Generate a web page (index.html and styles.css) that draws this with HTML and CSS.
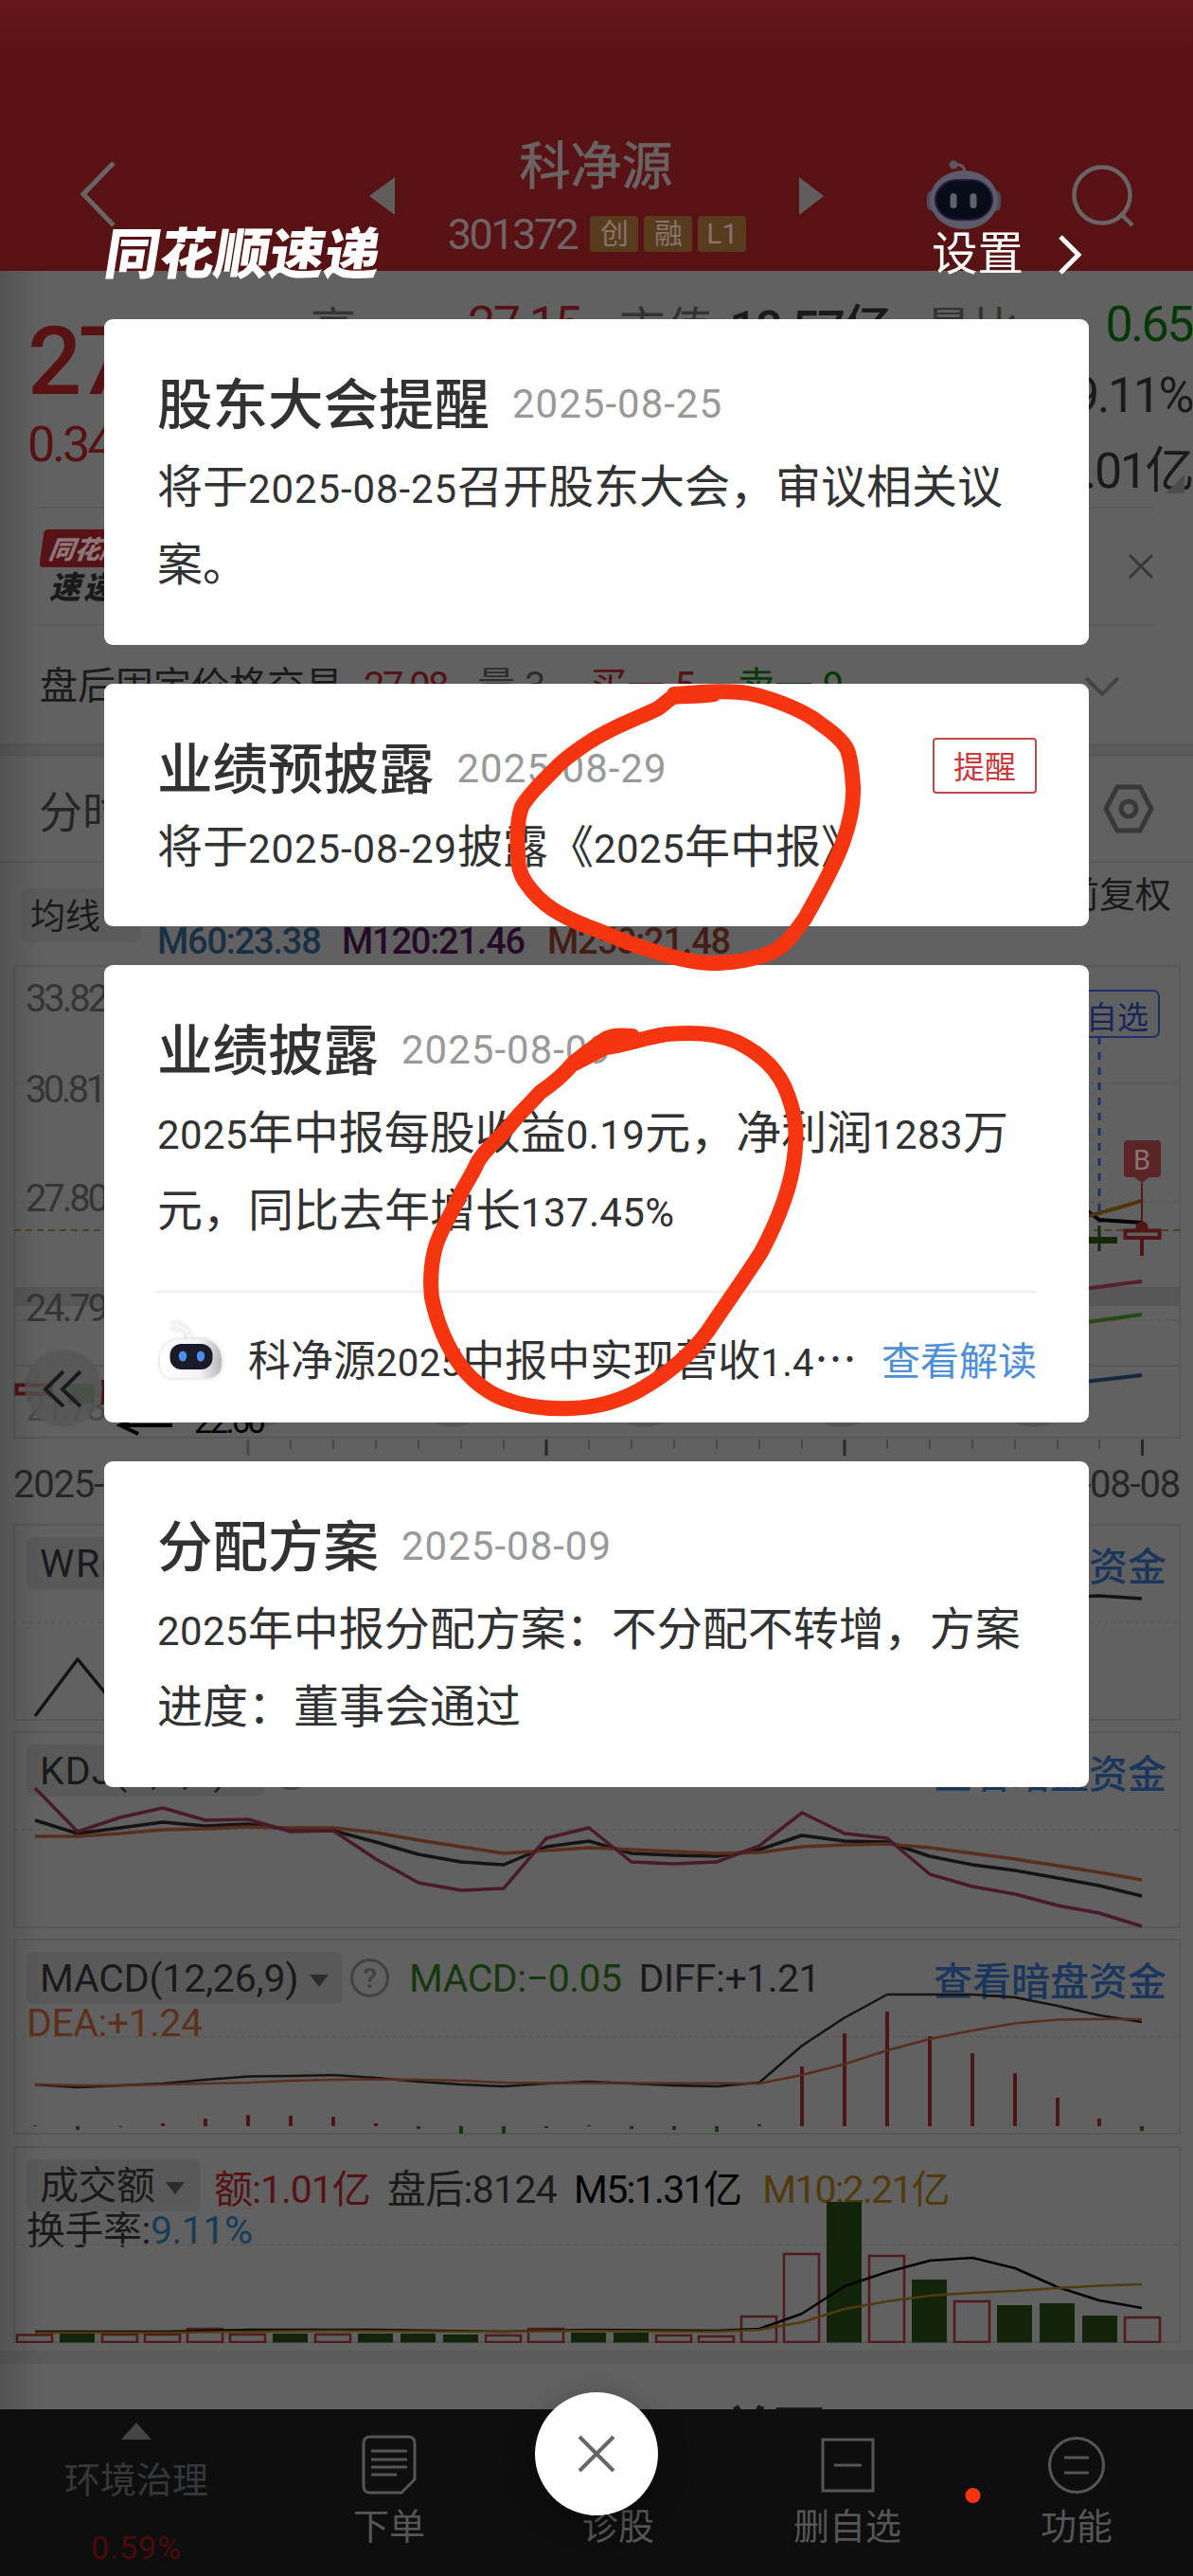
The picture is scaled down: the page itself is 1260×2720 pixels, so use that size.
FILE: index.html
```
<!DOCTYPE html>
<html lang="zh-CN">
<head>
<meta charset="utf-8">
<title>科净源 301372</title>
<link rel="stylesheet" href="styles.css">
</head>
<body>
<div class="page">
  <header class="topbar">
    <svg class="back" viewBox="0 0 42 72"><path d="M38 3 6 36l32 33"/></svg>
    <svg class="prev" viewBox="0 0 27 40"><path d="M27 0v40L0 20z"/></svg>
    <div class="stock">
      <div class="stock-name">科净源</div>
      <div class="stock-code"><span class="code">301372</span><span class="tag">创</span><span class="tag">融</span><span class="tag">L1</span></div>
    </div>
    <svg class="next" viewBox="0 0 27 40"><path d="M0 0v40l26-20z"/></svg>
    <svg class="bot" viewBox="0 0 80 76">
      <path d="M30 6q10-2 11 8" fill="none" stroke="#625c66" stroke-width="3"/><circle cx="29" cy="6" r="4.500" fill="#5c555e"/>
      <rect x="1" y="33" width="14" height="22" rx="6" fill="#4c4a5e"/><rect x="65" y="33" width="14" height="22" rx="6" fill="#4c4a5e"/>
      <ellipse cx="40" cy="43" rx="36" ry="31" fill="#5d5b6a"/><rect x="10" y="22" width="60" height="42" rx="23" fill="#080c18" stroke="#241c3c" stroke-width="2"/>
      <rect x="25.500" y="36" width="7" height="16" rx="3.500" fill="#5c6468"/><rect x="46.500" y="36" width="7" height="16" rx="3.500" fill="#5c6468"/>
    </svg>
    <svg class="search" viewBox="0 0 68 68"><circle cx="32" cy="32" r="29.500"/><path d="M51 51 64 64"/></svg>
  </header>

  <section class="quote">
    <div class="quote-left"><div class="price">27.49</div><div class="change">0.34</div></div>
    <div class="quote-grid">
      <div class="q-row"><span class="q-label q-high">高</span><span class="q-val red q-highv">27.15</span><span class="q-label q-cap">市值</span><span class="q-val q-capv">18.57亿</span><span class="q-label q-ratio">量比</span><span class="q-val green end">0.65</span></div>
      <div class="q-row"><span class="q-val end">9.11%</span></div>
      <div class="q-row"><span class="q-val end">1.01亿</span></div>
    </div>
    <svg class="corner" viewBox="0 0 20 20"><path d="M20 0v20H0z"/></svg>
  </section>

  <section class="promo">
    <div class="promo-logo"><div class="promo-tag">同花顺</div><div class="promo-sub">速递</div></div>
    <svg class="promo-x" viewBox="0 0 28 28"><path d="M2 2l24 24M26 2 2 26"/></svg>
  </section>

  <section class="after">
    <span>盘后固定价格交易</span><span class="red a1">27.08</span><span class="a2">量&nbsp;3</span><span class="red a3">买一&nbsp;5</span><span class="green a4">卖一&nbsp;9</span>
    <svg class="chev-down" viewBox="0 0 38 22"><path d="M2 2l17 17L36 2"/></svg>
  </section>

  <section class="tabs">
    <span>分时</span>
    <svg class="hex" viewBox="0 0 54 52"><path d="M15 3h24l12 23-12 23H15L3 26z"/><circle cx="27" cy="26" r="8"/></svg>
  </section>

  <section class="ma">
    <div class="ma-top"><span class="ma-pill">均线</span><span class="fq">前复权</span></div>
    <div class="ma-row"><span class="m60">M60:23.38</span><span class="m120">M120:21.46</span><span class="m250">M250:21.48</span></div>
  </section>

  <svg class="kline" viewBox="0 1019 1260 523">
    <g class="frame"><path d="M15 1021H1246V1519H15ZM15 1443H1246"/></g>
    <rect x="15" y="1360" width="1231" height="20" fill="#575757"/>
    <g class="dash"><path d="M15 1145H1246M15 1270H1246M15 1395H1246"/></g>
    <path d="M15 1300H1246" stroke="#4c4028" stroke-width="2" stroke-dasharray="7 5"/>
    <g class="axis">
      <text x="27" y="1069" textLength="88">33.82</text><text x="27" y="1165" textLength="86">30.81</text>
      <text x="27" y="1280" textLength="88">27.80</text><text x="27" y="1396" textLength="88">24.79</text>
      <text x="27" y="1501" textLength="86" fill="#484848">21.78</text>
    </g>
    <path d="M17.500 1463.500H54V1472.500H17.500Z" fill="none" stroke="#4e1416" stroke-width="4"/>
    <path d="M72 1462h28v21H72z" fill="#2b3f22"/><path d="M107 1458h12v26h-12z" fill="#4e1416"/>
    <g fill="#555" ><circle cx="67" cy="1467" r="41" fill-opacity=".75"/><circle cx="273" cy="1467" r="41"/><circle cx="478" cy="1467" r="41"/><circle cx="682" cy="1467" r="41"/><circle cx="889" cy="1467" r="41"/><circle cx="1092" cy="1467" r="41"/></g>
    <path d="M67 1449 48 1468l19 18M85 1449l-19 19 19 18" fill="none" stroke="#1b1b1b" stroke-width="4"/>
    <path d="M182 1506H128M146 1515 127 1506l18-9" fill="none" stroke="#000" stroke-width="4"/>
    <text x="205" y="1514" font-size="35" textLength="76" fill="#000">22.60</text>
    <path d="M1161 1096V1292" stroke="#1c3168" stroke-width="3" stroke-dasharray="8 8"/>
    <rect x="1136" y="1047" width="88" height="49" rx="6" fill="none" stroke="#1c3168" stroke-width="2"/>
    <text x="1213" y="1087" font-size="33" text-anchor="end" fill="#162757">自选</text>
    <g fill="none" stroke-width="4"><path d="M1120 1262 1150 1281 1161 1289 1206 1292" stroke="#000"/><path d="M1120 1292 1161 1282 1206 1269" stroke="#503508"/><path d="M1120 1365 1206 1354" stroke="#552029"/><path d="M1120 1401 1206 1389" stroke="#254a14"/><path d="M1120 1463 1206 1453" stroke="#142840"/></g>
    <path d="M1161 1295v27" stroke="#122a0a" stroke-width="3"/><path d="M1142 1307h38v7h-38z" fill="#122a0a"/>
    <path d="M1206 1250v50" stroke="#521a1c" stroke-width="2"/><circle cx="1206" cy="1297" r="6.500" fill="#501517"/>
    <path d="M1206 1309v18" stroke="#501517" stroke-width="4"/><path d="M1188.500 1300.500h36v7.500h-36z" fill="#616161" stroke="#501517" stroke-width="4"/>
    <path d="M1191 1205h31q4 0 4 4v31q0 4-4 4h-8l-8 6-8-6h-7q-4 0-4-4v-31q0-4 4-4z" fill="#5b2427"/>
    <text x="1197" y="1236" font-size="30" textLength="18" lengthAdjust="spacingAndGlyphs" fill="#8a7374">B</text>
    <path class="ticks" d="M307 1521v10M352 1521v10M397 1521v10M442 1521v10M487 1521v10M532 1521v10M622 1521v10M667 1521v10M712 1521v10M757 1521v10M802 1521v10M847 1521v10M937 1521v10M982 1521v10M1027 1521v10M1072 1521v10M1117 1521v10M1161 1521v10"/>
    <path d="M262 1521v17" stroke="#4a4a4a" stroke-width="3"/><path d="M577 1521v17M892 1521v17M1206.500 1521v17" stroke="#282828" stroke-width="3"/>
  </svg>
  <div class="dates"><span>2025-07-03</span><span>2025-08-08</span></div>

  <section class="panel">
    <svg viewBox="14 1609 1233 208"><path class="frame" d="M15 1610H1246V1816H15Z"/><path class="dash" d="M15 1713H1246"/><path class="ln" stroke="#141414" d="M37 1812 82 1752 127 1807M1117 1687 1161 1685 1206 1688"/></svg>
    <div class="legend"><span class="pill pw">WR(10,6)</span><span class="link">查看暗盘资金</span></div>
  </section>
  <section class="panel">
    <div class="legend"><span class="pill pk">KDJ(9,3,3)</span><i class="q">?</i><span class="link">查看暗盘资金</span></div>
    <svg viewBox="14 1828 1233 208"><path class="frame" d="M15 1829H1246V2035H15Z"/><path class="dash" d="M15 1932H1246"/>
      <polyline class="ln" stroke="#141414" points="37,1922 82,1936 127,1930 172,1924 217,1928 262,1926 307,1932 352,1933 397,1945 442,1958 487,1966 532,1969 577,1950 622,1944 667,1957 712,1959 757,1960 802,1953 847,1938 892,1944 937,1945 982,1960 1027,1969 1072,1975 1117,1983 1161,1991 1206,2002"/>
      <polyline class="ln" stroke="#5a2e1c" points="37,1939 82,1939 127,1936 172,1932 217,1931 262,1929 307,1930 352,1930 397,1935 442,1943 487,1950 532,1957 577,1954 622,1951 667,1953 712,1955 757,1957 802,1956 847,1950 892,1948 937,1947 982,1951 1027,1957 1072,1963 1117,1970 1161,1977 1206,1985"/>
      <polyline class="ln" stroke="#49192c" points="37,1888 82,1934 127,1919 172,1909 217,1922 262,1921 307,1934 352,1933 397,1963 442,1988 487,1996 532,1994 577,1941 622,1930 667,1966 712,1968 757,1966 802,1949 847,1914 892,1936 937,1941 982,1979 1027,1992 1072,2000 1117,2012 1161,2020 1206,2034"/></svg>
  </section>
  <section class="panel">
    <div class="legend"><span class="pill pm">MACD(12,26,9)<b></b></span><i class="q">?</i><span class="mgreen">MACD:−0.05</span><span class="diff">DIFF:+1.21</span><span class="link">查看暗盘资金</span></div>
    <div class="legend2 dea">DEA:+1.24</div>
    <svg viewBox="14 2048 1233 207"><path class="frame" d="M15 2049H1246V2254H15Z"/><path class="dash" d="M15 2151.500H1246"/>
      <path stroke="#4c1618" stroke-width="4" d="M37 2246v-1M172 2246v-3M217 2246v-8M262 2246v-12M307 2246v-11M352 2246v-10M397 2246v-3M622 2246v-1M802 2246v-2M847 2246v-63M892 2246v-98M937 2246v-121M982 2246v-95M1027 2246v-77M1072 2246v-56M1117 2246v-30M1161 2246v-8"/>
      <path stroke="#17380f" stroke-width="4" d="M82 2246v4M127 2246v1M442 2246v3M487 2246v8M532 2246v8M577 2246v2M667 2246v3M712 2246v4M757 2246v6M1206 2246v5"/>
      <polyline class="ln thin" stroke="#141414" points="37,2202 82,2205 127,2203 172,2201 217,2197 262,2193.500 307,2193 352,2192 397,2195 442,2199 487,2202 532,2204 577,2201 622,2199 667,2201 712,2203 757,2204 802,2200 847,2161 892,2131.500 937,2107 1027,2107 1072,2110 1117,2119 1161,2129 1206,2136"/>
      <polyline class="ln thin" stroke="#5a2e1c" points="37,2202 82,2203 127,2203 172,2202 217,2201 262,2200 307,2198 352,2197 397,2196.500 442,2197 487,2198 532,2200 577,2200.500 667,2200.500 802,2201 847,2192 892,2180.500 937,2166 982,2154 1027,2145 1072,2137.500 1117,2133.500 1161,2133 1206,2133"/></svg>
  </section>
  <section class="panel">
    <div class="legend"><span class="pill pv">成交额<b></b></span><span class="red v1">额:1.01亿</span><span class="v2">盘后:8124</span><span class="v3">M5:1.31亿</span><span class="v4">M10:2.21亿</span></div>
    <div class="legend2">换手率:<span class="blue">9.11%</span></div>
    <svg viewBox="14 2266 1233 208"><path class="frame" d="M15 2267H1246V2473H15Z"/><path class="dash" d="M15 2370H1246"/>
      <path fill="#122409" d="M63 2464h37v9.500H63zM288 2464h37v9.500h-37zM378 2464h37v9.500h-37zM423 2464h37v9.500h-37zM468 2465h37v8.500h-37zM603 2463h37v10.500h-37zM648 2463h37v10.500h-37zM873 2325h37v148.500h-37zM963 2407h37v66.500h-37zM1053 2434h37v39.500h-37zM1098 2432h37v41.500h-37zM1143 2445h37v28.500h-37z"/>
      <path fill="none" stroke="#4f1b1d" stroke-width="2.500" d="M18 2465.500h37v7.500H18zM108 2465h37v8h-37zM153 2465h37v8h-37zM198 2459h37v14h-37zM243 2465h37v8h-37zM333 2465h37v8h-37zM513 2466h37v7h-37zM558 2459h37v14h-37zM693 2466h37v7h-37zM738 2467h37v6h-37zM783 2446h37v27h-37zM828 2380h37v93h-37zM918 2382h37v91h-37zM1008 2430h37v43h-37zM1188 2447h37v26h-37z"/>
      <polyline class="ln thin" stroke="#000" points="37,2462 172,2462 262,2460 397,2460 532,2462 622,2460 757,2461 802,2459 847,2443 892,2414 937,2399 982,2387 1027,2384 1072,2395 1117,2415 1161,2429 1206,2437"/>
      <polyline class="ln thin" stroke="#503a0e" points="37,2463 172,2463 352,2461 532,2462 622,2461 757,2462 802,2460 847,2452 892,2438 937,2430 982,2424 1027,2421 1072,2419 1117,2416 1161,2413.500 1206,2412"/></svg>
  </section>
  <div class="more"><span>关西</span></div>

  <nav class="bottombar">
    <div class="tab sector"><svg width="32" height="18" viewBox="0 0 32 18"><path d="M16 0 32 18H0z" fill="#444"/></svg><span class="sec-name">环境治理</span><span class="sec-val">0.59%</span></div>
    <div class="tab"><svg width="60" height="66" viewBox="0 0 60 66"><path d="M10 3H50q7 0 7 7V48L43 62H10Q3 62 3 55V10Q3 3 10 3ZM11 18H49M11 27H49M11 35H49M11 43H38"/></svg><span>下单</span></div>
    <div class="tab"><svg width="60" height="66"></svg><span>诊股</span></div>
    <div class="tab"><svg width="60" height="66" viewBox="0 0 60 66"><path d="M4 6H57V60H4ZM16 33H45"/></svg><span>删自选</span></div>
    <div class="tab"><svg width="60" height="66" viewBox="0 0 60 66"><circle cx="30" cy="33" r="28.500"/><path d="M17 25H43M17 41H43"/></svg><span>功能</span></div>
  </nav>
</div>
<div class="edge"></div>

<div class="modal">
  <div class="modal-head">
    <div class="logo">同花顺速递</div>
    <div class="settings"><span>设置</span><svg viewBox="0 0 26 44"><path d="M3 3 22 22 3 41"/></svg></div>
  </div>
  <div class="cards">
    <article class="card">
      <h2>股东大会提醒<time>2025-08-25</time></h2>
      <p>将于<span class="n d">2025-08-25</span>召开股东大会，审议相关议案。</p>
    </article>
    <article class="card short">
      <h2>业绩预披露<time>2025-08-29</time><button>提醒</button></h2>
      <p>将于<span class="n d">2025-08-29</span>披露《<span class="n">2025</span>年中报》</p>
    </article>
    <article class="card tall">
      <h2>业绩披露<time>2025-08-09</time></h2>
      <p><span class="n">2025</span>年中报每股收益<span class="n">0.19</span>元，净利润<span class="n">1283</span>万元，同比去年增长<span class="n">137.45%</span></p>
      <div class="foot">
        <svg viewBox="0 0 76 72">
          <defs><linearGradient id="g" x1="0" x2="1"><stop offset="0" stop-color="#fff"/><stop offset=".65" stop-color="#f4f2f4"/><stop offset="1" stop-color="#b9b6ba"/></linearGradient><filter id="s" x="-20%" y="-20%" width="140%" height="140%"><feDropShadow dx="0" dy="0" stdDeviation="2" flood-opacity=".22"/></filter></defs>
          <g filter="url(#s)"><circle cx="22" cy="10" r="4.500" fill="#f4f4f4"/><path d="M22 9q13 2 14 16" fill="none" stroke="#f6f6f6" stroke-width="4"/><path d="M30 24h18c14 0 22 9 22 24 0 12-5 17-17 17H20C9 65 5 59 5 47c0-14 9-23 25-23z" fill="url(#g)"/></g>
          <rect x="15.500" y="29" width="45" height="27" rx="12" fill="#1c1a28"/><ellipse cx="29" cy="42" rx="4.200" ry="5.500" fill="#4a90ea"/><ellipse cx="48" cy="42" rx="4.200" ry="5.500" fill="#4a90ea"/>
        </svg>
        <span class="foot-text">科净源<span class="n">2025</span>中报中实现营收<span class="n">1.4</span>⋯</span>
        <a>查看解读</a>
      </div>
    </article>
    <article class="card">
      <h2>分配方案<time>2025-08-09</time></h2>
      <p><span class="n">2025</span>年中报分配方案：不分配不转增，方案进度：董事会通过</p>
    </article>
  </div>
  <div class="close"><svg viewBox="0 0 40 40"><path d="M2 2l36 36M38 2 2 38"/></svg></div>
</div>

<svg class="marker" viewBox="0 0 1260 2720">
  <path d="M754 733C735 736 722 734 712 736 705 738 701 745 693 749 670 760 645 768 620 785 608 793 596 801 586 812 570 828 558 840 551 852 546 866 546 885 547 900 547 912 548 922 556 933 572 956 592 967 620 978 640 985 655 993 680 1001 702 1008 725 1016 752 1017 772 1017 795 1013 812 1007 832 998 840 983 850 970 862 948 880 918 890 890 898 868 902 850 901 830 900 815 899 803 895 792 889 779 873 769 858 758 840 747 812 736 790 732 772 729 752 730 712 733"/>
  <path d="M668 1094C655 1093 645 1093 638 1098 628 1105 618 1112 606 1122 595 1135 583 1145 571 1153 560 1165 549 1175 538 1189 525 1205 512 1213 504 1228 498 1242 490 1252 484 1266 475 1285 464 1300 459 1320 455 1337 454 1352 456 1370 462 1400 474 1425 488 1444 500 1459 514 1470 532 1477 555 1486 580 1488 604 1487 632 1486 655 1479 675 1468 705 1451 730 1430 748 1405 765 1379 785 1352 804 1322 822 1288 835 1256 839 1222 842 1195 841 1180 832 1156 823 1130 803 1112 778 1100 755 1090 730 1090 704 1092 682 1095 660 1104 640 1106L607 1123"/>
  <circle cx="1027.500" cy="2635" r="8"/>
</svg>
</body>
</html>
```
FILE: styles.css
```
* { box-sizing: border-box; }
body { margin: 0; position: relative; width: 1260px; height: 2720px; overflow: hidden; background: #616161; color: #1a1a1a; font-family: Roboto, "Noto Sans CJK SC", sans-serif; white-space: nowrap; }
svg { display: block; flex: none; }
.red { color: #551315; }
.green { color: #063806; }
.blue { color: #173c58; }

.page { display: flex; flex-direction: column; height: 2720px; overflow: hidden; }
.topbar { flex: none; height: 286px; background: linear-gradient(#641618, #591215 70px, #581214); display: flex; align-items: flex-start; padding-left: 82px; }
.back { width: 42px; height: 72px; margin-top: 169px; fill: none; stroke: #6b6465; stroke-width: 5; }
.prev, .next { width: 27px; height: 40px; margin-top: 187px; fill: #625d5d; }
.prev { margin-left: 266px; }
.stock { width: 427px; height: 130px; margin-top: 144px; }
.stock-name { font-size: 54px; line-height: 66px; text-align: center; color: #6a6263; margin-right: 2px; -webkit-text-stroke: 0.8px #6a6263; }
.stock-code { display: flex; justify-content: center; align-items: center; gap: 6px; height: 50px; margin: 12px 0 0 0; }
.code { font-size: 45px; letter-spacing: -2.500px; margin-right: 8px; color: #706365; }
.tag { width: 51px; height: 38px; border-radius: 4px; background: #593b1e; color: #86756a; font-size: 30px; line-height: 38px; text-align: center; }
.bot { width: 80px; height: 76px; margin: 168px 0 0 107px; }
.search { width: 68px; height: 68px; margin: 174px 0 0 74px; fill: none; stroke: #6b6465; stroke-width: 4.500; }

.quote { flex: none; height: 251px; position: relative; display: flex; margin: 0 41px; padding-top: 10px; border-bottom: 2px solid #595959; }
.quote-left { flex: none; width: 291px; margin-left: -12px; }
.price { font-size: 101px; line-height: 120px; margin-top: 26px; letter-spacing: -4px; font-weight: 500; color: #591214; }
.change { font-size: 52px; line-height: 60px; margin-top: -2px; letter-spacing: -3px; color: #591214; }
.quote-grid { width: 939px; flex: none; }
.q-row { position: relative; display: flex; align-items: center; height: 75px; margin-top: 9px; font-size: 52px; letter-spacing: -2.500px; }
.q-row + .q-row { margin-top: 0; }
.q-val.end { margin-left: auto; }
.q-label { font-size: 48px; color: #333; letter-spacing: 2px; }
.q-high { margin-left: 8px; }
.q-highv { margin-left: 116px; }
.q-cap { margin-left: 42px; }
.q-capv { margin-left: 16px; font-weight: 500; }
.q-ratio { margin-left: 38px; }
.corner { position: absolute; right: -32px; bottom: 14px; width: 20px; fill: #4c4c4c; }

.promo { flex: none; height: 124px; margin: 0 41px; border-bottom: 2px solid #595959; display: flex; justify-content: space-between; }
.promo-logo { margin: 22px 0 0 3px; }
.promo-tag { width: 160px; height: 40px; background: #571215; color: #8b7779; font: italic 900 27px/40px "Noto Sans CJK SC", sans-serif; padding-left: 8px; border-radius: 4px; transform: skewX(-8deg); }
.promo-sub { font: italic 900 33px/38px "Noto Sans CJK SC", sans-serif; padding-left: 8px; letter-spacing: 3px; }
.promo-x { width: 28px; height: 28px; margin-top: 47px; fill: none; stroke: #383838; stroke-width: 3; }

.after { flex: none; height: 124px; padding: 37px 77px 0 42px; display: flex; font-size: 40px; line-height: 54px; letter-spacing: 0; }
.a1 { margin-left: 22px; letter-spacing: -2.500px; }
.a2 { margin-left: 32px; color: #2e2e2e; }
.a3 { margin-left: 46px; }
.a4 { margin-left: 44px; }
.chev-down { width: 38px; height: 22px; margin: 16px 0 0 auto; fill: none; stroke: #444; stroke-width: 4; }

.tabs { flex: none; height: 126px; border-top: 14px solid #595959; border-bottom: 2px solid #595959; padding: 0 41px; display: flex; align-items: center; justify-content: space-between; font-size: 46px; color: #262626; }
.hex { width: 54px; height: 52px; fill: none; stroke: #383838; stroke-width: 5; }

.ma { flex: none; height: 108px; padding: 12px 23px 0 21px; }
.ma-top { display: flex; justify-content: space-between; align-items: flex-start; height: 56px; }
.ma-pill { width: 128px; height: 57px; margin-top: 15px; border-radius: 8px; background: #5b5b5b; padding-left: 11px; font-size: 37px; line-height: 61px; }
.fq { font-size: 38px; line-height: 44px; }
.ma-row { display: flex; height: 40px; line-height: 50px; margin-top: -10px; font-size: 38px; letter-spacing: -1.200px; font-weight: 500; margin-left: 145px; }
.m60 { color: #183044; width: 195px; }
.m120 { color: #240c28; width: 217px; }
.m250 { color: #451d17; }

.kline { width: 1260px; height: 523px; margin-top: -1px; }
.kline text { font-family: Roboto, "Noto Sans CJK SC", sans-serif; }
.axis { font-size: 40px; fill: #353535; }
.frame { fill: none; stroke: #575757; stroke-width: 2; }
.dash { fill: none; stroke: #555; stroke-width: 1.500; stroke-dasharray: 4 4; }
.ticks { fill: none; stroke: #494949; stroke-width: 2; }
.dates { flex: none; height: 68px; padding: 3px 14px 0 14px; display: flex; justify-content: space-between; font-size: 40px; line-height: 48px; letter-spacing: -1.200px; color: #262626; }

.panel { flex: none; position: relative; width: 1233px; height: 208px; margin: 0 0 11px 14px; }
.panel svg { position: absolute; left: 0; top: 0; width: 1233px; }
.ln { fill: none; stroke-width: 3.500; stroke-linejoin: round; }
.ln.thin { stroke-width: 2.500; }
.legend { display: flex; align-items: center; height: 55px; padding: 0 15px 0 14px; position: relative; top: 14px; font-size: 41px; letter-spacing: -0.500px; }
.pill { height: 55px; line-height: 57px; border-radius: 8px; background: #595959; padding-left: 14px; }
.pill b { display: inline-block; border: 10px solid transparent; border-top: 13px solid #2c2c2c; border-bottom: 0; margin: 0 0 5px 12px; }
.pw { width: 260px; letter-spacing: 1.500px; }
.pk { width: 251px; letter-spacing: 1px; }
.pm { width: 334px; letter-spacing: -0.200px; }
.pv { width: 184px; }
.pv b { margin-left: 11px; }
.q { width: 41px; height: 41px; border: 3px solid #424242; border-radius: 50%; margin-left: 8px; font: normal 500 30px/35px Roboto, sans-serif; text-align: center; color: #424242; }
.mgreen { color: #17380f; margin-left: 21px; }
.diff { margin-left: 18px; }
.link { margin-left: auto; color: #1b365c; font-weight: 500; letter-spacing: 0; font-size: 41px; }
.legend2 { margin-top: 9px; padding-left: 14px; font-size: 41px; line-height: 50px; letter-spacing: -0.500px; }
.dea { color: #5c301c; }
.v1 { margin-left: 14px; letter-spacing: -1px; }
.v2 { margin-left: 18px; letter-spacing: -0.700px; }
.v3 { margin-left: 18px; color: #000; letter-spacing: -1.700px; }
.v4 { margin-left: 23px; color: #503a0e; letter-spacing: -1.800px; }

.more { flex: none; height: 62px; margin-top: -3px; border-top: 14px solid #5a5a5a; overflow: hidden; padding: 42px 0 0 763px; font-size: 54px; line-height: 60px; font-weight: 700; }

.bottombar { flex: none; height: 176px; background: #0e0e0e; display: flex; padding-left: 23px; position: relative; color: #555; font-size: 38px; }
.tab { width: 242px; flex: none; display: flex; flex-direction: column; align-items: center; padding-top: 26px; }
.tab:nth-child(2) { margin-left: 25px; }
.tab svg { fill: none; stroke: #555; stroke-width: 3; }
.tab > span { line-height: 48px; margin-top: 8px; }
.sector { padding-top: 14px; }
.sector svg { stroke: none; }
.sector .sec-name { margin-top: 19px; color: #34383a; }
.sector .sec-val { margin-top: 23px; color: #4c0a0c; font-size: 34px; letter-spacing: 1px; }

.edge { position: absolute; inset: 286px 0 176px 0; background: linear-gradient(90deg, rgba(0,0,0,.14), transparent 45px); }

.modal { position: absolute; inset: 0; display: flex; flex-direction: column; padding: 236px 110px 0; }
.modal-head { display: flex; justify-content: space-between; height: 101px; color: #fff; }
.logo { font: 900 58px/66px "Noto Sans CJK SC", sans-serif; transform: skewX(-9deg); margin: -5px 0 0 -1px; }
.settings { display: flex; gap: 36px; font-size: 48.500px; line-height: 66px; margin-right: 7px; }
.settings svg { width: 26px; height: 44px; margin-top: 11px; fill: none; stroke: #fff; stroke-width: 5; }
.cards { display: flex; flex-direction: column; gap: 41px; }
.card { height: 344px; background: #fff; border-radius: 9px; padding: 44px 55px 0 56px; color: #323232; }
.card h2 { margin: 0 0 11px; height: 82px; display: flex; align-items: center; font-size: 58.500px; font-weight: 500; }
.card time { font-size: 42px; font-weight: 400; color: #999; margin: 9px 0 0 24px; letter-spacing: 1px; }
.card p { margin: 0; height: 164px; font-size: 48px; line-height: 82px; white-space: normal; letter-spacing: 0; }
.n { font-size: 42px; line-height: 1; letter-spacing: 0.350px; }
.n.d { letter-spacing: 0.900px; }
.card.short { height: 256px; }
.card.tall { height: 483px; }
.card.short p { line-height: 72px; height: 72px; }
.card button { margin: 2px 0 0 auto; width: 110px; height: 59px; padding: 0; background: none; border: 2px solid #c0484a; border-radius: 4px; color: #c83a3c; font: 33px "Roboto", "Noto Sans CJK SC", sans-serif; }
.foot { display: flex; align-items: center; height: 139px; margin: 43px 0 0 -2px; border-top: 2px solid #eee; }
.foot svg { width: 76px; height: 72px; margin-bottom: 16px; }
.foot-text { font-size: 45px; margin-left: 22px; }
.foot-text .n { font-size: 40px; }
.foot a { margin-left: auto; color: #4d90d8; font-size: 41px; }
.close { width: 130px; height: 130px; margin: 639px auto 0; border-radius: 50%; background: #fff; display: grid; place-items: center; box-shadow: 0 8px 30px rgba(0,0,0,.35); }
.close svg { width: 40px; height: 40px; fill: none; stroke: #666; stroke-width: 4; }

.marker { position: absolute; left: 0; top: 0; width: 1260px; height: 2720px; }
.marker path { fill: none; stroke: #f5350f; stroke-width: 16; stroke-linejoin: round; stroke-linecap: round; }
.marker circle { fill: #f5350f; }
```
